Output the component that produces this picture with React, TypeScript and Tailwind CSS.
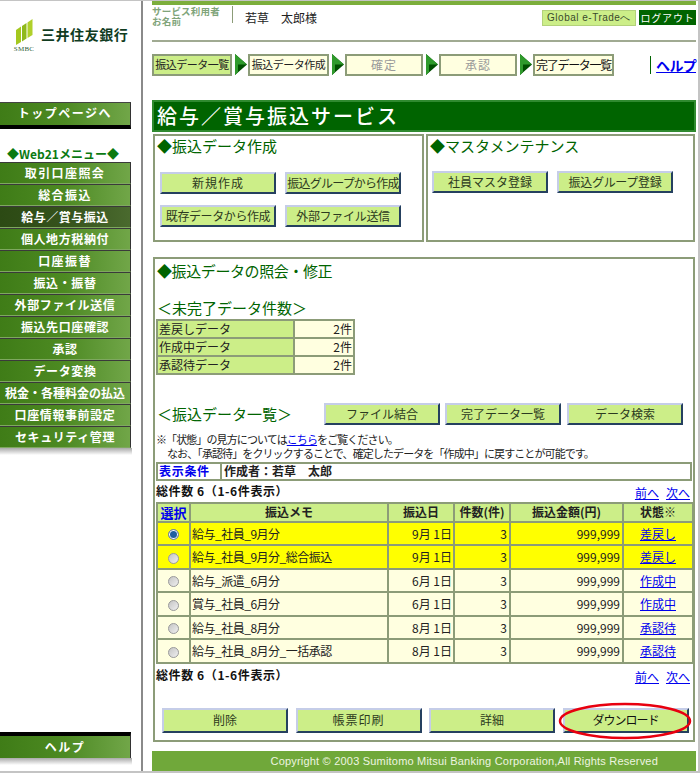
const JP = 'font-["Noto_Sans_CJK_JP","Liberation_Sans",sans-serif]';

type MenuItem = { label: string; cls: string; active?: boolean };

const MENU: MenuItem[] = [
  { label: '取引口座照会', cls: 'tracking-[1.4px]' },
  { label: '総合振込', cls: 'tracking-[1.4px]' },
  { label: '給与／賞与振込', cls: 'tracking-[0.5px]', active: true },
  { label: '個人地方税納付', cls: 'tracking-[0.6px]' },
  { label: '口座振替', cls: 'tracking-[1.4px]' },
  { label: '振込・振替', cls: 'tracking-[0.6px]' },
  { label: '外部ファイル送信', cls: 'tracking-[0.6px]' },
  { label: '振込先口座確認', cls: 'tracking-[0.6px]' },
  { label: '承認', cls: 'tracking-[0.6px]' },
  { label: 'データ変換', cls: 'tracking-[0.6px]' },
  { label: '税金・各種料金の払込', cls: 'tracking-[0px]' },
  { label: '口座情報事前設定', cls: 'tracking-[0.6px]' },
  { label: 'セキュリティ管理', cls: 'tracking-[0.6px]' },
];

const ROWS = [
  { memo: '給与_社員_9月分', date: '9月 1日', status: '差戻し', hot: true, checked: true },
  { memo: '給与_社員_9月分_総合振込', date: '9月 1日', status: '差戻し', hot: true },
  { memo: '給与_派遣_6月分', date: '6月 1日', status: '作成中' },
  { memo: '賞与_社員_6月分', date: '6月 1日', status: '作成中' },
  { memo: '給与_社員_8月分', date: '8月 1日', status: '承認待' },
  { memo: '給与_社員_8月分_一括承認', date: '8月 1日', status: '承認待' },
];

function GreenBtn({ label, className }: { label: string; className: string }) {
  return (
    <button
      type="button"
      className={`shrink-0 flex items-center justify-center whitespace-nowrap bg-[#ccee88] border-t-2 border-l-2 border-t-[#c5cde8] border-l-[#c5cde8] border-b-2 border-r-2 border-b-[#25405f] border-r-[#25405f] text-[12px] leading-none text-[#2c3a20] ${className}`}
    >
      {label}
    </button>
  );
}

function Arrow() {
  return (
    <svg width="12" height="21" viewBox="0 0 12 21" className="shrink-0">
      <path d="M0 0 L12 10.5 L0 21 Z" fill="#004f00" />
      <path d="M0 0 L12 10.5 L3 10.5 L3 18 L0 21 Z" fill="#2f9a2c" />
    </svg>
  );
}

function Step({ label, className }: { label: string; className: string }) {
  return (
    <div className={`shrink-0 h-[22px] flex items-center justify-center border-2 border-[#8c9c78] leading-none whitespace-nowrap ${className}`}>
      {label}
    </div>
  );
}

function Logo() {
  return (
    <div className="flex items-start h-[34px]">
      <div className="ml-[13px] w-[22px] flex flex-col items-center shrink-0">
        <svg width="17" height="26" viewBox="0 0 17 26">
          <path d="M0 11 L5 7.5 L5 23 L0 26 Z" fill="#a4c81e" />
          <path d="M6 7 L10.5 4 L10.5 19.5 L6 22.5 Z" fill="#8fb91c" />
          <path d="M11.5 3.5 L16.5 0 L16.5 16 L11.5 19 Z" fill="#b0d02a" />
        </svg>
        <span className="font-['Liberation_Serif',serif] text-[7px] leading-[8px] text-[#2f5f3a] tracking-[0.2px]">SMBC</span>
      </div>
      <span className="ml-[6px] mt-[8px] text-[14px] leading-none font-bold text-[#103c1f] tracking-[0.55px] whitespace-nowrap">三井住友銀行</span>
    </div>
  );
}

function Sidebar() {
  return (
    <aside className="w-[143px] shrink-0 border-r-2 border-r-[#8a8a8a] flex flex-col pt-[18px]">
      <Logo />
      <div className="mt-[49px] w-[131px] h-[27px] flex items-center justify-center border-t border-t-[#444] border-b-[4px] border-b-black border-r border-r-[#333] bg-gradient-to-r from-[#3f7c17] via-[#4d8a22] to-[#71a648] text-white font-bold text-[12px] tracking-[1.5px] pb-[2px]">
        トップページへ
      </div>
      <div className="mt-[17px] h-[16px] w-[126px] flex items-center justify-center text-[12px] font-bold text-[#0b7a12] leading-none whitespace-nowrap">
        ◆Web21メニュー◆
      </div>
      <nav className="w-[131px] flex flex-col">
        {MENU.map((m) => (
          <div
            key={m.label}
            className={`h-[22px] flex items-center justify-center border-t border-t-[#3a3a3a] border-r border-r-[#333] border-b border-b-[#7fa860] text-white font-bold text-[12px] leading-none whitespace-nowrap ${m.cls} ${
              m.active
                ? 'bg-gradient-to-r from-[#2c4a14] via-[#35521c] to-[#4a6a2e]'
                : 'bg-gradient-to-r from-[#3f7c17] via-[#4d8a22] to-[#71a648]'
            }`}
          >
            {m.label}
          </div>
        ))}
      </nav>
      <div className="h-[7px] w-[132px] bg-gradient-to-b from-[#aaaaaa] to-white" />
      <div className="flex-1" />
      <div className="w-[131px] h-[26px] flex items-center justify-center border-t-[4px] border-t-black border-r border-r-[#333] bg-gradient-to-r from-[#3f7c17] via-[#4d8a22] to-[#71a648] text-white font-bold text-[12px] tracking-[1.5px]">
        ヘルプ
      </div>
      <div className="h-[7px] w-[132px] bg-gradient-to-b from-[#aaaaaa] to-white" />
      <div className="h-[6px]" />
    </aside>
  );
}

function TopBar() {
  return (
    <>
      <div className="h-[4px] bg-[#7cae3c]" />
      <div className="h-[37px] flex items-start border-b-2 border-b-[#a0aa92]">
        <div className="w-[80px] mt-[1px] text-[9.5px] leading-[10px] font-bold text-[#7fa47a] tracking-[0.2px] whitespace-nowrap">
          サービス利用者
          <br />
          お名前
        </div>
        <div className="w-px h-[17px] mt-[1px] bg-[#8c9c78]" />
        <div className="ml-[12px] mt-[7px] text-[12px] leading-none text-[#222] whitespace-nowrap">若草　太郎様</div>
        <div className="flex-1" />
        <div className="mt-[5px] mr-[3px] w-[94px] h-[16px] flex items-center justify-center bg-[#ccee88] border border-[#b3d27a] font-['Liberation_Sans',sans-serif] text-[10px] leading-none text-[#3a4a2c] tracking-[0.5px] whitespace-nowrap">
          Global e-Tradeへ
        </div>
        <div className="mt-[5px] w-[57px] h-[15px] flex items-center justify-center bg-[#006400] text-[10px] leading-none text-white tracking-[0.8px]">
          ログアウト
        </div>
      </div>
    </>
  );
}

function Steps() {
  return (
    <div className="mt-[12px] flex items-center">
      <Step label="振込データ一覧" className="w-[80px] bg-[#ccee88] text-[#222] tracking-[-0.5px] text-[11px]" />
      <div className="ml-[3px] mr-[1px]"><Arrow /></div>
      <Step label="振込データ作成" className="w-[81px] bg-[#ffffe0] text-[#222] tracking-[-0.5px] text-[11px]" />
      <div className="ml-[3px] mr-[1px]"><Arrow /></div>
      <Step label="確定" className="w-[78px] bg-[#ffffe0] text-[#9a9a9a] text-[12px] tracking-[1px]" />
      <div className="ml-[3px] mr-[1px]"><Arrow /></div>
      <Step label="承認" className="w-[78px] bg-[#ffffe0] text-[#9a9a9a] text-[12px] tracking-[1px]" />
      <div className="ml-[3px] mr-[1px]"><Arrow /></div>
      <Step label="完了データ一覧" className="w-[81px] bg-[#ffffe0] text-[#111] text-[12px] tracking-[-1.3px]" />
      <div className="ml-[36px] w-[2px] h-[18px] bg-[#006400]" />
      <a className="ml-[6px] text-[14px] leading-none font-bold text-[#0000ee] underline tracking-[-0.7px] whitespace-nowrap">ヘルプ</a>
    </div>
  );
}

function TopPanels() {
  return (
    <div className="mt-[2px] ml-[1px] flex gap-[2px] pr-[1px]">
      <section className="w-[271px] h-[108px] border-2 border-[#8c9c78] pl-[5px]">
        <h2 className="-ml-[3px] text-[15px] leading-[20px] text-[#006400] whitespace-nowrap">◆振込データ作成</h2>
        <div className="mt-[16px] flex gap-[9px]">
          <GreenBtn label="新規作成" className="w-[116px] h-[22px] tracking-[1px]" />
          <GreenBtn label="振込グループから作成" className="w-[116px] h-[22px] text-[11.5px] tracking-[-0.8px]" />
        </div>
        <div className="mt-[11px] flex gap-[9px]">
          <GreenBtn label="既存データから作成" className="w-[116px] h-[22px] tracking-[-0.4px]" />
          <GreenBtn label="外部ファイル送信" className="w-[116px] h-[22px] tracking-[-0.3px]" />
        </div>
      </section>
      <section className="flex-1 h-[108px] border-2 border-[#8c9c78] pl-[4px]">
        <h2 className="-ml-[2px] text-[15px] leading-[20px] text-[#006400] whitespace-nowrap">◆マスタメンテナンス</h2>
        <div className="mt-[15px] flex gap-[9px]">
          <GreenBtn label="社員マスタ登録" className="w-[116px] h-[22px]" />
          <GreenBtn label="振込グループ登録" className="w-[116px] h-[22px] tracking-[-0.3px]" />
        </div>
      </section>
    </div>
  );
}

function SummaryTable() {
  const rows = ['差戻しデータ', '作成中データ', '承認待データ'];
  return (
    <table className="border-collapse w-[199px] text-[12px] leading-none table-fixed">
      <tbody>
        {rows.map((r) => (
          <tr key={r} className="h-[18px]">
            <td className="w-[137px] border-2 border-[#8c9c78] bg-[#ccee88] pl-[1px] text-[#222]">{r}</td>
            <td className="border-2 border-[#8c9c78] bg-[#ffffe0] text-right pr-[1px] text-[#222]">2件</td>
          </tr>
        ))}
      </tbody>
    </table>
  );
}

function Pager() {
  return (
    <div className="flex gap-[7px] text-[12px] leading-none text-[#0000ee] underline pr-[2px]">
      <a>前へ</a>
      <a>次へ</a>
    </div>
  );
}

function TotalCount() {
  return <span className="pb-[2px] text-[12px] leading-none font-bold text-[#111] tracking-[0.6px] whitespace-nowrap">総件数 6（1-6件表示）</span>;
}

function TransferTable() {
  const th = 'border-2 border-[#8c9c78] bg-[#ccee88] text-center text-[12px] font-bold text-[#222] p-0';
  return (
    <table className="border-collapse w-[536px] table-fixed mt-[3px] leading-none">
      <colgroup>
        <col className="w-[33px]" />
        <col className="w-[198px]" />
        <col className="w-[66px]" />
        <col className="w-[56px]" />
        <col className="w-[113px]" />
        <col className="w-[70px]" />
      </colgroup>
      <thead>
        <tr className="h-[19px]">
          <th className={`${th} !text-[#0000ee] !text-[13px]`}>選択</th>
          <th className={th}>振込メモ</th>
          <th className={th}>振込日</th>
          <th className={th}>件数(件)</th>
          <th className={th}>振込金額(円)</th>
          <th className={th}>状態※</th>
        </tr>
      </thead>
      <tbody className="text-[12px] text-[#222]">
        {ROWS.map((r) => {
          const td = `border-2 border-[#8c9c78] p-0 ${r.hot ? 'bg-[#ffff00]' : 'bg-[#ffffe0]'}`;
          return (
            <tr key={r.memo} className="h-[23.5px]">
              <td className={`${td} text-center`}>
                <input
                  type="radio"
                  name="sel"
                  defaultChecked={r.checked}
                  className="appearance-none align-middle w-[11px] h-[11px] rounded-full border border-[#9a9a9a] bg-gradient-to-br from-[#c4c4c4] to-[#f0f0f0] checked:from-[#1f5f9f] checked:to-[#1f5f9f] checked:border-[#7a8a9a] checked:ring-1 checked:ring-inset checked:ring-white"
                />
              </td>
              <td className={`${td} pl-[1px] tracking-[-0.5px] whitespace-nowrap`}>{r.memo}</td>
              <td className={`${td} text-right pr-[1px]`}>{r.date}</td>
              <td className={`${td} text-right pr-[2px]`}>3</td>
              <td className={`${td} text-right pr-[2px]`}>999,999</td>
              <td className={`${td} text-center text-[#0000ee] underline`}>{r.status}</td>
            </tr>
          );
        })}
      </tbody>
    </table>
  );
}

function InquiryPanel() {
  return (
    <section className="mt-[15px] ml-[1px] mr-[1px] h-[486px] border-2 border-[#8c9c78] px-[1px] pt-[1px]">
      <h2 className="ml-[1px] mt-[1px] text-[15px] leading-[20px] text-[#006400] tracking-[-0.4px] whitespace-nowrap">◆振込データの照会・修正</h2>
      <h3 className="ml-[1px] mt-[17px] text-[15px] leading-[20px] text-[#006400] whitespace-nowrap">＜未完了データ件数＞</h3>
      <div className="mt-[1px]"><SummaryTable /></div>
      <div className="mt-[28px] flex items-center">
        <h3 className="ml-[1px] w-[167px] text-[15px] leading-[20px] text-[#006400] whitespace-nowrap">＜振込データ一覧＞</h3>
        <div className="flex gap-[5px]">
          <GreenBtn label="ファイル結合" className="w-[116px] h-[22px]" />
          <GreenBtn label="完了データ一覧" className="w-[116px] h-[22px]" />
          <GreenBtn label="データ検索" className="w-[116px] h-[22px] ml-[1px]" />
        </div>
      </div>
      <p className="mt-[7px] text-[11px] leading-[14px] text-[#222] tracking-[-0.9px] whitespace-nowrap">
        ※「状態」の見方については<a className="text-[#0000ee] underline">こちら</a>をご覧ください。
        <br />
        <span className="ml-[11px]">なお、「承認待」をクリックすることで、確定したデータを「作成中」に戻すことが可能です。</span>
      </p>
      <div className="mt-[2px] w-[536px] h-[19px] flex border-2 border-[#8c9c78] text-[12px] leading-none items-center">
        <div className="w-[64px] h-full flex items-center border-r-2 border-r-[#8c9c78] pl-[1px] font-bold text-[#0000ee] tracking-[0.7px]">表示条件</div>
        <div className="pl-[2px] font-bold text-[#222] whitespace-nowrap">作成者：若草　太郎</div>
      </div>
      <div className="mt-[2px] w-[536px] h-[16px] flex items-end justify-between">
        <TotalCount />
        <Pager />
      </div>
      <TransferTable />
      <div className="mt-[3px] w-[536px] h-[16px] flex items-end justify-between">
        <TotalCount />
        <Pager />
      </div>
      <div className="relative mt-[25px] ml-[6px] flex gap-[7.5px]">
        <GreenBtn label="削除" className="w-[126px] h-[25px]" />
        <GreenBtn label="帳票印刷" className="w-[126px] h-[25px] tracking-[1px]" />
        <GreenBtn label="詳細" className="w-[126px] h-[25px]" />
        <GreenBtn label="ダウンロード" className="w-[126px] h-[25px] !text-[#111] tracking-[-1px]" />
        <svg width="134" height="38" viewBox="0 0 134 38" className="absolute left-[396px] -top-[6px] pointer-events-none">
          <ellipse cx="67" cy="19" rx="65" ry="17" fill="none" stroke="#e8000f" strokeWidth="2.5" />
        </svg>
      </div>
    </section>
  );
}

export default function App() {
  return (
    <div className={`${JP} w-[700px] h-[773px] bg-white flex border-t border-t-[#c4c4c4] border-b-2 border-b-[#c4c4c4] border-r-2 border-r-[#c4c4c4] overflow-hidden`}>
      <Sidebar />
      <main className="flex-1 min-w-0 ml-[9px] mr-[2px] flex flex-col">
        <TopBar />
        <Steps />
        <div className="mt-[24px] h-[32px] bg-[#006400] border-2 border-[#2f8a2f] flex items-center pl-[3px] text-white text-[20px] font-medium leading-none tracking-[2px] whitespace-nowrap">
          給与／賞与振込サービス
        </div>
        <TopPanels />
        <InquiryPanel />
        <footer className="mt-[9px] h-[20px] bg-[#70a83a] flex items-center justify-end pr-[38px] font-['Liberation_Sans',sans-serif] text-[11px] leading-none text-[#eef5e0] tracking-[0.2px] whitespace-nowrap">
          Copyright © 2003 Sumitomo Mitsui Banking Corporation,All Rights Reserved
        </footer>
      </main>
    </div>
  );
}
